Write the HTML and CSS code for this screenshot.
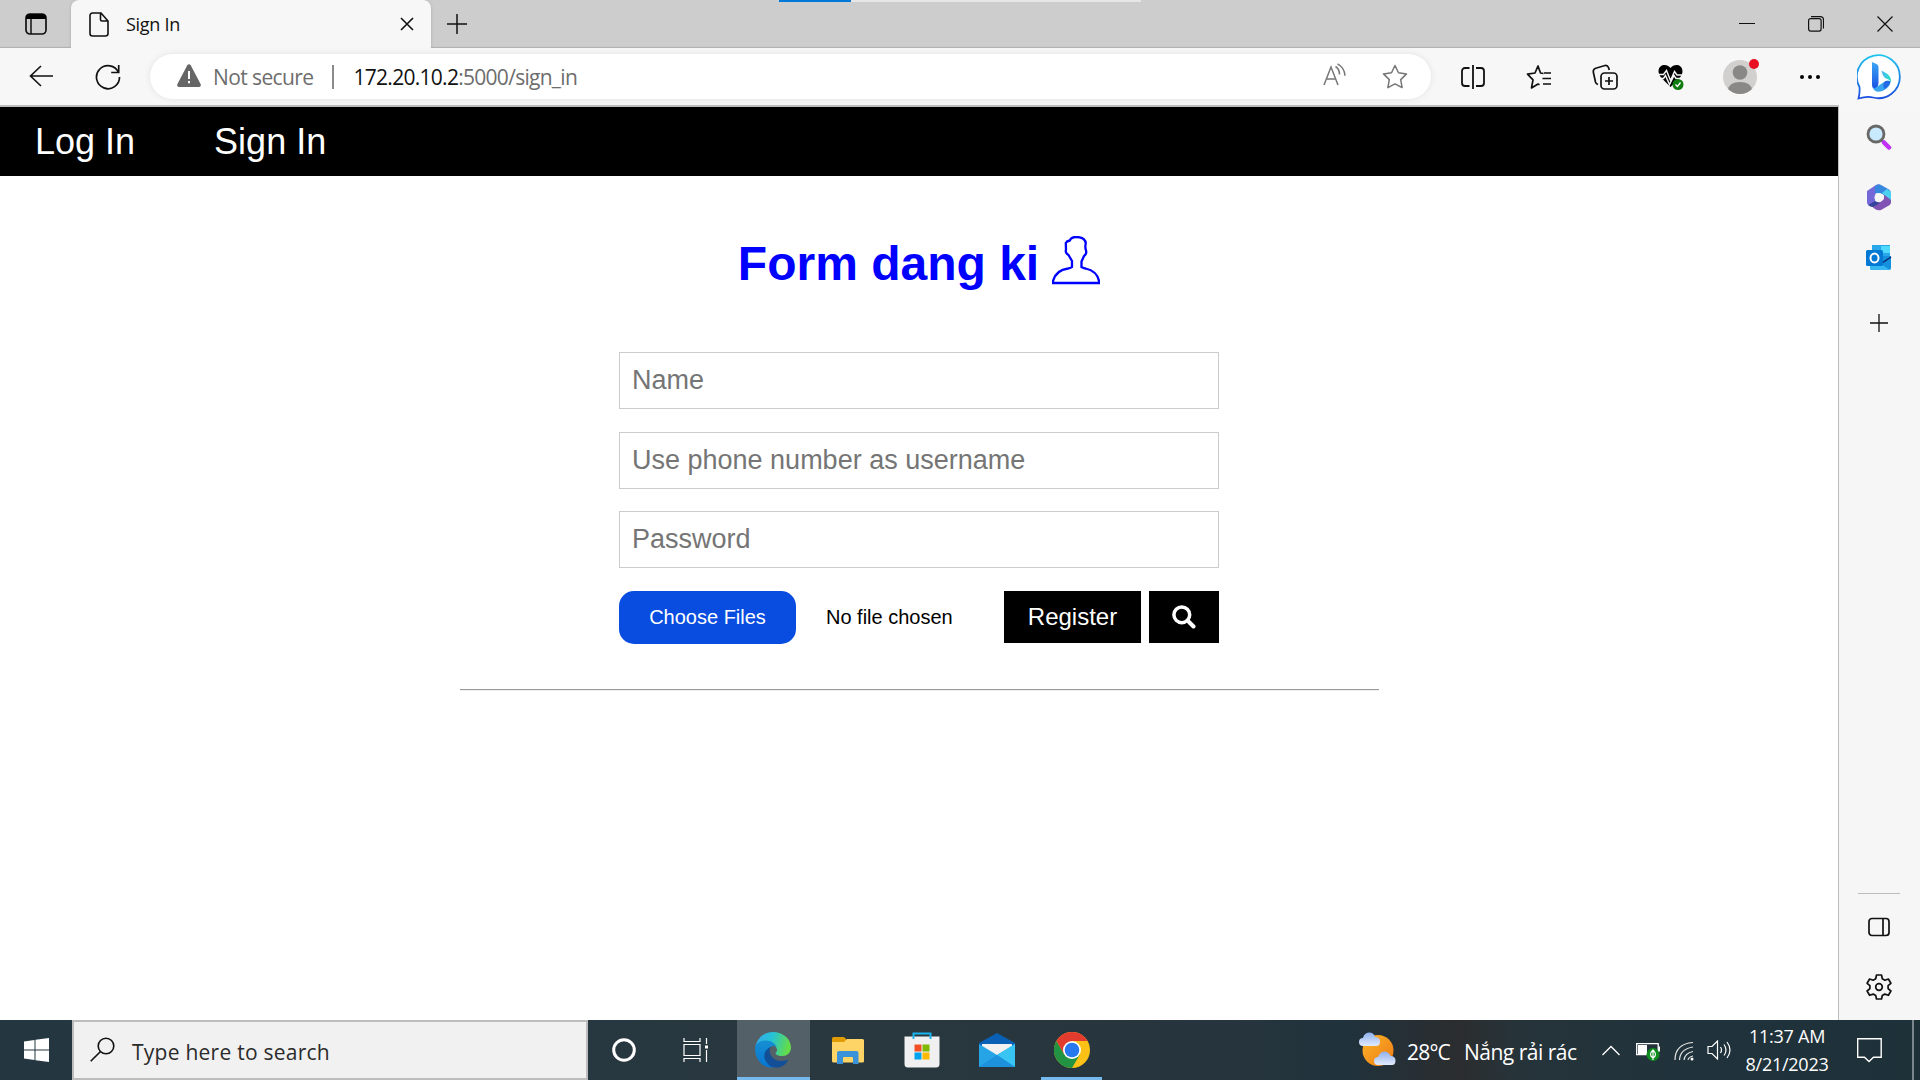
FILE: index.html
```html
<!DOCTYPE html>
<html lang="en">
<head>
<meta charset="utf-8">
<title>Sign In</title>
<link rel="stylesheet" href="styles.css">
</head>
<body>
<div class="screen">
  <header class="titlebar">
    <div class="load-strip"><div class="load-progress"></div></div>
    <svg class="tab-actions" width="22" height="22" viewBox="0 0 22 22"><rect x="1" y="1" width="20" height="20" rx="4" fill="none" stroke="#111" stroke-width="1.7"/><path d="M1 6V5a4 4 0 0 1 4-4h12a4 4 0 0 1 4 4v1z" fill="#000"/><path d="M6 6v15" stroke="#111" stroke-width="1.5"/></svg>
    <div class="tab">
      <svg width="20" height="25" viewBox="0 0 20 25" fill="none" stroke="#111" stroke-width="1.6"><path d="M4 1h8l7 8v12.500a2.500 2.500 0 0 1-2.500 2.500h-13A2.500 2.500 0 0 1 1 21.500V3.500A2.500 2.500 0 0 1 3.500 1zM11.500 1v6.500a1.500 1.500 0 0 0 1.500 1.500h6"/></svg>
      <span class="tab-title">Sign In</span>
      <svg class="tab-close" width="14" height="14" viewBox="0 0 14 14" stroke="#111" stroke-width="1.6"><path d="M1 1l12 12M13 1L1 13"/></svg>
    </div>
    <svg class="new-tab" width="22" height="22" viewBox="0 0 22 22" stroke="#111" stroke-width="1.5"><path d="M11 1v20M1 11h20"/></svg>
    <div class="window-buttons">
      <svg width="16" height="16" viewBox="0 0 16 16" stroke="#111" stroke-width="1"><path d="M0 7.500h16"/></svg>
      <svg width="16" height="16" viewBox="0 0 16 16" fill="none" stroke="#111" stroke-width="1.2"><rect x=".6" y="2.600" width="12.500" height="12.500" rx="2"/><path d="M3 .6h9.500a3 3 0 0 1 3 3V12.500"/></svg>
      <svg width="16" height="16" viewBox="0 0 16 16" stroke="#111" stroke-width="1.2"><path d="M.5.5l15 15M15.500.5l-15 15"/></svg>
    </div>
  </header>

  <div class="toolbar">
    <svg class="back" width="25" height="22" viewBox="0 0 25 22" fill="none" stroke="#111" stroke-width="1.6"><path d="M12 1L1.500 11 12 21M1.500 11H24"/></svg>
    <svg class="reload" width="26" height="26" viewBox="0 0 26 26" fill="none" stroke="#111" stroke-width="1.7"><path d="M23.500 8.500A11.500 11.500 0 1 0 24.500 13M23.700 1v7.500h-7.500"/></svg>
    <div class="address">
      <svg class="warning" width="24" height="23" viewBox="0 0 24 23"><path d="M10.300 1.200a2 2 0 0 1 3.400 0l10 19A2 2 0 0 1 22 23H2a2 2 0 0 1-1.700-2.800z" fill="#666"/><path d="M12 7v8M12 17v2.200" stroke="#fff" stroke-width="2"/></svg>
      <span class="security">Not secure</span>
      <span class="divider"></span>
      <span class="url"><span class="host">172.20.10.2</span>:5000/sign_in</span>
      <svg class="read-aloud" width="23" height="24" viewBox="0 0 23 24" fill="none" stroke="#767676" stroke-width="1.5"><path d="M1 22L8 4l7 18M3.500 16h9"/><path d="M12.500 3.500q4 2.500 4 8M14.500.8q7 3.500 7.500 12"/></svg>
      <svg class="star" width="26" height="25" viewBox="0 0 26 25" fill="none" stroke="#767676" stroke-width="1.5" stroke-linejoin="round"><path d="M13 1.500l3.500 7.300 8 1.100-5.800 5.700 1.400 8L13 19.800l-7.100 3.800 1.400-8-5.800-5.700 8-1.100z"/></svg>
    </div>
    <div class="tools">
      <svg width="26" height="26" viewBox="0 0 26 26" fill="none" stroke="#111" stroke-width="1.800"><path d="M9.500 4H5a3 3 0 0 0-3 3v12a3 3 0 0 0 3 3h4.500M16 4h5a3 3 0 0 1 3 3v12a3 3 0 0 1-3 3h-5M13 1v24"/></svg>
      <svg width="26" height="26" viewBox="0 0 26 26" fill="none" stroke="#111" stroke-width="1.700" stroke-linejoin="round"><path d="M17.500 9.500l-3-.5L12 2 9 9l-7.500 1.200L7 15.800 5.500 24l6.500-4 1.500.8M18 9h7M16.500 14.500H25M17 20h8"/></svg>
      <svg width="26" height="26" viewBox="0 0 26 26" fill="none" stroke="#111" stroke-width="1.700"><rect x="9" y="9" width="16" height="16" rx="3.500"/><path d="M17 13v8M13 17h8M6 20.500q-2-.5-2.500-2.500L1.300 8Q1 5 3.700 4.200L13 1.500q2.500-.5 3.500 2l.8 2.500"/></svg>
      <svg width="26" height="26" viewBox="0 0 26 26"><path d="M12.500 4C9-.5 1 0 .5 7q0 4 3.500 7.500L12.500 23l8.500-8.500Q24.500 11 24.500 7C24 0 16-.5 12.500 4z" fill="#000"/><path d="M0 10.500h5.500l3-4 4 10 4-9 2.500 3.500h6M0 14.500h5.500l2-3 4 9 4.500-9 2 3h7" fill="none" stroke="#f6f6f6" stroke-width="1.400"/><circle cx="20" cy="20.500" r="5.500" fill="#107c10"/><path d="M17.500 20.500l2 2 3-4" fill="none" stroke="#fff" stroke-width="1.300"/></svg>
      <svg class="avatar" width="36" height="36" viewBox="0 0 36 36"><defs><clipPath id="face"><circle cx="17" cy="19" r="17"/></clipPath></defs><circle cx="17" cy="19" r="17" fill="#d2d0ce"/><g clip-path="url(#face)" fill="#8a8886"><circle cx="17" cy="14.500" r="7.300"/><path d="M5 36V32q1-8 12-8t12 8v4z"/></g><circle cx="31" cy="6" r="5" fill="#e81123"/></svg>
      <svg width="22" height="6" viewBox="0 0 22 6"><circle cx="3" cy="3" r="2" /><circle cx="11" cy="3" r="2"/><circle cx="19" cy="3" r="2"/></svg>
    </div>
    <svg class="bing" width="46" height="46" viewBox="0 0 46 46"><defs><linearGradient id="bingRing" x2="0" y2="1"><stop stop-color="#21c5ee"/><stop offset="1" stop-color="#1b4ee0"/></linearGradient><linearGradient id="bingStem" x2="0" y2="1"><stop stop-color="#3aa8f5"/><stop offset="1" stop-color="#1c50e4"/></linearGradient><linearGradient id="bingSwoosh" x2="1" y2="0"><stop stop-color="#46b8f8"/><stop offset="1" stop-color="#2fe0c3"/></linearGradient></defs><path d="M1.500 44.500Q3 39 2.500 33A21.500 21.500 0 1 1 16 43.500Q10 42 1.500 44.500z" fill="#fff" stroke="url(#bingRing)" stroke-width="1.800"/><path d="M15 8l4.500 2q2 1 2 3v16q0 3-2 5-4 2-4.500-3z" fill="url(#bingStem)"/><path d="M24.500 16.500l6 3.500q4 3 3.500 8-2-3-6-4-3-3-3.500-7.500z" fill="url(#bingSwoosh)"/><path d="M15.500 33q2 3 7-2l6-4q4-1 5 1-1 6-8 9-8 2.500-10-4z" fill="#39a5f0"/><path d="M28.500 27q4-1 5 1-1 4-6 7-3-4 1-8z" fill="#2568e5"/></svg>
  </div>

  <div class="workspace">
    <main class="page">
      <nav class="nav"><a>Log In</a><a>Sign In</a></nav>
      <h1 class="heading"><span>Form dang ki</span>
        <svg width="48" height="49" viewBox="0 0 48 49" fill="none" stroke="#00f" stroke-width="2.300"><path d="M1 47v-2q3-11 15-12.500 3-.5 4-1.500v-6l-3.500-6Q13 17 14 13.500L13.800 7q1-2 4-2.500 1.500-3.500 6-3.500 9.500 0 10 6.500-1 3 .2 7Q35 18 32 20l-2.500 5.500V31q2 1.200 4 1.500Q45 35 47 45v2z"/></svg>
      </h1>
      <form class="form">
        <input type="text" placeholder="Name">
        <input type="text" placeholder="Use phone number as username">
        <input type="text" placeholder="Password">
        <div class="actions">
          <button type="button" class="choose">Choose Files</button>
          <span class="file-state">No file chosen</span>
          <button type="button" class="register">Register</button>
          <button type="button" class="find"><svg width="24" height="24" viewBox="0 0 24 24" fill="none" stroke="#fff"><circle cx="9.800" cy="9.800" r="7.900" stroke-width="3.500"/><path d="M15.500 15.500l6 6" stroke-width="4" stroke-linecap="round"/></svg></button>
        </div>
      </form>
      <div class="rule"></div>
    </main>
    <aside class="sidebar">
      <svg class="side-search" width="26" height="26" viewBox="0 0 26 26"><path d="M15.500 16.500l7 6.500" stroke="#555" stroke-width="2"/><path d="M18 18.500l5 5" stroke="#c030f5" stroke-width="4.500" stroke-linecap="round"/><circle cx="10" cy="10" r="8" fill="#c9e9fc" stroke="#686868" stroke-width="2.800"/></svg>
      <svg class="side-office" width="26" height="27" viewBox="0 0 26 27"><path d="M1 7L10 1q3-1.500 4 0l-4 7-1 10-6 3q-2 0-2-3z" fill="#7468d8"/><path d="M9 2q4-2.500 7-.5l7 4q2 1 2 4v6L16 10l-7-1z" fill="#3688df"/><path d="M25 10v9q-.5 2-3 3l-7 4q-3 1-6-1l-5-4 10-3 4-3v-6z" fill="#8054b4"/><path d="M25 8v8l-9-7 5-4z" fill="#4bd1ef"/><path d="M2 21l7-4 5 2-7 4q-3 0-5-2z" fill="#34449b"/><circle cx="13" cy="13.500" r="4.500" fill="#f6f6f6"/></svg>
      <svg class="side-outlook" width="26" height="25" viewBox="0 0 26 25"><path d="M6 0h18v14H6z" fill="#28a8ea"/><path d="M15 1h9v7h-9z" fill="#50d9ff"/><path d="M4 11h21v12q0 2-2 2H6q-2 0-2-2z" fill="#1490df"/><path d="M4 12l20 13H6q-2 0-2-2z" fill="#35b8f1"/><path d="M25 12l-9 6" stroke="#0a2767" stroke-width="1.500"/><rect y="5" width="17" height="16" rx="1.500" fill="#0078d4"/><ellipse cx="8.500" cy="13" rx="4" ry="4.500" fill="none" stroke="#fff" stroke-width="2"/></svg>
      <svg class="side-add" width="18" height="18" viewBox="0 0 18 18" stroke="#111" stroke-width="1.300"><path d="M9 0v18M0 9h18"/></svg>
      <div class="side-bottom">
        <svg width="22" height="20" viewBox="0 0 22 20" fill="none" stroke="#111" stroke-width="1.700"><rect x="1" y="1.500" width="20" height="17" rx="3"/><path d="M15 1.500v17"/></svg>
        <svg width="26" height="26" viewBox="0 0 26 26" fill="none" stroke="#111" stroke-width="1.700" stroke-linejoin="round"><path d="M10.500 1h5l.8 3.800 2.500 1.400 3.600-1.200 2.500 4.300-2.800 2.400v2.900l2.800 2.400-2.500 4.300-3.600-1.200-2.500 1.400-.8 3.500h-5l-.8-3.500-2.500-1.400L3.600 21.300 1.100 17l2.800-2.400v-2.900L1.100 9.300 3.600 5l3.600 1.200 2.500-1.400z"/><circle cx="13" cy="13" r="3.300"/></svg>
      </div>
    </aside>
  </div>

  <footer class="taskbar">
    <div class="start"><svg width="25" height="24" viewBox="0 0 25 24" fill="#fff"><path d="M0 3.500l10.500-1.500v9.500H0zM11.500 1.800L25 0v11.500H11.500zM0 12.500h10.500V22L0 20.500zM11.500 12.500H25V24l-13.500-1.800z"/></svg></div>
    <div class="search-box">
      <svg width="25" height="25" viewBox="0 0 25 25" fill="none" stroke="#111" stroke-width="1.600"><circle cx="16" cy="9" r="7.800"/><path d="M10.500 14.500L.7 24.300"/></svg>
      <span>Type here to search</span>
    </div>
    <div class="apps">
      <div class="app"><svg width="26" height="26" viewBox="0 0 26 26"><circle cx="13" cy="13" r="10.300" fill="none" stroke="#fff" stroke-width="3"/></svg></div>
      <div class="app"><svg width="26" height="24" viewBox="0 0 26 24" fill="none" stroke="#fff" stroke-width="1.200"><path d="M1 0v3.500h16V0M1 24v-3.500h16V24M1 6.500h16v11H1zM23.500 0v6M23.500 12v12"/><path d="M22 7.500h3v3h-3z" fill="#fff" stroke="none"/></svg></div>
      <div class="app edge"><svg width="36" height="36" viewBox="0 0 36 36"><defs><linearGradient id="edgeTop" x2="1" y2=".2"><stop stop-color="#35a9ee"/><stop offset=".5" stop-color="#25c2d4"/><stop offset="1" stop-color="#63dc4a"/></linearGradient><linearGradient id="edgeLeft" x2="0" y2="1"><stop stop-color="#168fd2"/><stop offset="1" stop-color="#0875d1"/></linearGradient></defs><path d="M.5 15C2 6 9 0 18 0c10 0 18 7 18 15.500 0 5-4 8.500-8.500 8.500-5 0-7-1.500-7-3 2-2 2-4 .5-6Q15 8 6 10.500z" fill="url(#edgeTop)"/><path d="M.3 14Q4 8 11.500 8.500 19 9 21.500 15q-2-1.500-4-1-7 3-5.500 11 2 8 11 9.500Q10 38 4 29-.8 23 .3 14z" fill="url(#edgeLeft)"/><path d="M16 14.500q-9 5-6 13 4 9 13 8 7-1 10.500-8-14 5-18.500-6-1-4 1-7z" fill="#124f96"/></svg></div>
      <div class="app"><svg width="32" height="27" viewBox="0 0 32 27"><path d="M0 1.500Q0 0 1.500 0H12l3 3-2 3H0z" fill="#e09b05"/><path d="M0 5h12l3-3h15.500Q32 2 32 3.500V24q0 1.500-1.500 1.500h-29Q0 25.500 0 24z" fill="#ffd466"/><path d="M5 27V16q0-2 2-2h17.500q2 0 2 2v11H21v-6q0-1-1-1h-8q-1 0-1 1v6z" fill="#3a93d8"/></svg></div>
      <div class="app"><svg width="36" height="36" viewBox="0 0 36 36"><path d="M.5 4.500h35V32q0 3.500-3.500 3.500H4Q.5 35.500.5 32z" fill="#f0f0f0"/><path d="M9.500 7V1.500h17V7" fill="none" stroke="#1bb3ed" stroke-width="2"/><path d="M10.500 12.500h7v7h-7z" fill="#f25022"/><path d="M18.500 12.500h7v7h-7z" fill="#7fba00"/><path d="M10.500 20.500h7v7h-7z" fill="#00a4ef"/><path d="M18.500 20.500h7v7h-7z" fill="#ffb900"/></svg></div>
      <div class="app"><svg width="36" height="34" viewBox="0 0 36 34"><path d="M0 10L18 0l18 10v5H0z" fill="#0960b5"/><path d="M3 11h30v13H3z" fill="#f1f1f1"/><path d="M0 11l18 11 18-11v23H0z" fill="#26a4e5"/><path d="M36 11v23L18 22z" fill="#38c5f3"/><path d="M0 34l18-12 18 12z" fill="#1c91dc"/></svg></div>
      <div class="app chrome"><svg width="36" height="36" viewBox="0 0 36 36"><circle cx="18" cy="18" r="18" fill="#fbc116"/><path d="M2.400 9A18 18 0 0 1 33.600 9H18L10.200 22.500z" fill="#e33b2e"/><path d="M2.400 9A18 18 0 0 0 18 36l7.800-13.500H10.200z" fill="#229342"/><circle cx="18" cy="18" r="9" fill="#fff"/><circle cx="18" cy="18" r="7.300" fill="#2879ee"/></svg></div>
    </div>
    <div class="tray">
      <svg class="weather" width="38" height="34" viewBox="0 0 38 34"><defs><linearGradient id="sun" x2="1" y2="1"><stop stop-color="#fbb52b"/><stop offset="1" stop-color="#ee7a12"/></linearGradient><linearGradient id="cloud" x2="0" y2="1"><stop stop-color="#8fb0ee"/><stop offset="1" stop-color="#e2ebfd"/></linearGradient></defs><circle cx="19" cy="18.500" r="15.500" fill="url(#sun)"/><g fill="url(#cloud)"><path d="M4 14a4 4 0 0 1 0-8q1-5 6-5.500 5 0 6 4.500 5 0 5 4.500T17 14z"/><path d="M19 33a4 4 0 0 1 0-8q2-5 6-5.500 5 0 6.500 4.500 5 0 5 4.500T33 33z"/></g></svg>
      <span class="temp">28°C</span>
      <span class="sky">Nắng rải rác</span>
      <svg class="chevron" width="18" height="11" viewBox="0 0 18 11" fill="none" stroke="#fff" stroke-width="1.300"><path d="M.5 10L9 1.500 17.500 10"/></svg>
      <svg class="battery" width="24" height="18" viewBox="0 0 24 18"><path d="M.7.700h21.500v11H.7z" fill="none" stroke="#fff" stroke-width="1.300"/><path d="M2 2h9v9H2zM22.500 3.500H24v5h-1.500z" fill="#fff"/><circle cx="17" cy="11.500" r="6.500" fill="#0c8a1c"/><path d="M17 7q-5 5 0 8 5-3 0-8zM17 9v8" fill="none" stroke="#fff" stroke-width="1.200"/></svg>
      <svg class="wifi" width="20" height="20" viewBox="0 0 20 20" fill="none" stroke="#e8e8e8" stroke-width="1.200"><path d="M1 19Q1 3 19 1.500M5.500 19Q6 8 19 6M10 19q1-7 9-8.500M14 19q.5-3 5-4"/><circle cx="18" cy="18" r="1.500" fill="#fff" stroke="none"/></svg>
      <svg class="volume" width="24" height="20" viewBox="0 0 24 20" fill="none" stroke="#fff" stroke-width="1.200"><path d="M1 6.500h4L10.500 1v18L5 13.500H1zM13.500 7q2 3 0 6M17 4.500q4 5.500 0 11M20 2q6 8 0 16"/></svg>
      <div class="clock"><span>11:37 AM</span><span>8/21/2023</span></div>
      <svg class="notice" width="25" height="25" viewBox="0 0 25 25" fill="none" stroke="#fff" stroke-width="1.400"><path d="M.7.700h23.500v18.500H16.500L12 23.500l-4.500-4.300H.7z"/></svg>
      <div class="show-desktop"></div>
    </div>
  </footer>
</div>
</body>
</html>
```
FILE: styles.css
```css
* { box-sizing: border-box; }
body { margin: 0; font-family: "Open Sans", "Noto Sans", sans-serif; color: #111; background: #fff; overflow: hidden; }
svg { display: block; flex: none; }
.screen { width: 1920px; height: 1080px; display: flex; flex-direction: column; }

.titlebar { position: relative; height: 48px; flex: none; background: #cdcdcd; box-shadow: inset 0 -2px 1px -1px #b0b0b0; display: flex; align-items: center; padding-left: 25px; }
.load-strip { position: absolute; left: 779px; top: 0; width: 362px; height: 2px; background: #e6e6e6; }
.load-progress { width: 72px; height: 2px; background: #0078d7; }
.tab { display: flex; align-items: center; width: 360px; height: 48px; margin-left: 24px; padding: 0 17px 0 18px; background: #f7f7f7; border-radius: 8px 8px 0 0; box-shadow: 0 0 3px #aaa; clip-path: inset(0 -4px 0 -4px); }
.tab-title { font-size: 18px; letter-spacing: -.3px; margin-left: 17px; padding-bottom: 1px; }
.tab-close { margin-left: auto; }
.new-tab { margin: 0 0 1px 15px; }
.window-buttons { display: flex; gap: 53px; margin: 0 27px 0 auto; }

.toolbar { height: 57px; flex: none; background: #f7f7f7; display: flex; align-items: center; padding-left: 29px; }
.back { margin-bottom: 2px; }
.reload { margin-left: 41px; }
.address { width: 1281px; height: 45px; margin-left: 29px; padding: 0 23px 0 27px; display: flex; align-items: center; background: #fff; border-radius: 23px; box-shadow: 0 0 6px #e2e2e2; font-size: 21px; letter-spacing: -.6px; color: #6d6d6d; white-space: nowrap; }
.address .warning { margin-bottom: 2px; }
.security { margin-left: 12px; }
.divider { width: 2px; height: 24px; background: #8b8b8b; margin: 0 20px 0 18px; }
.url { letter-spacing: -.72px; }
.host { color: #111; }
.read-aloud { margin-left: auto; margin-bottom: 4px; }
.star { margin-left: 36px; }
.tools { display: flex; align-items: center; gap: 40px; margin-left: 29px; }
.avatar { margin: 0 0 2px -1px; }
.bing { margin: 0 0 0 36px; }

.workspace { flex: 1; min-height: 0; display: flex; background: #f6f6f6; }
.page { width: 1839px; border-top: 2px solid #bdbdbd; border-right: 1px solid #bdbdbd; background: #fff; display: flex; flex-direction: column; align-items: center; font-family: "Liberation Sans", Arial, sans-serif; }
.nav { align-self: stretch; height: 69px; background: #000; display: flex; align-items: center; gap: 79px; padding: 1px 0 0 35px; color: #fff; font-size: 36px; }
.heading { margin: 60px 0 0; height: 56px; display: flex; align-items: flex-start; gap: 13px; color: #00f; font-size: 48px; line-height: 56px; font-weight: 700; }
.form { width: 600px; margin-top: 60px; display: flex; flex-direction: column; gap: 22.500px; }
.form input { width: 100%; height: 57px; padding: 0 12px; border: 1px solid #ccc; font: 27px "Liberation Sans", Arial, sans-serif; outline: 0; }
.form input::placeholder { color: #757575; opacity: 1; }
.actions { display: flex; align-items: flex-start; }
.actions button { border: 0; color: #fff; background: #000; padding: 0; font-family: inherit; height: 52px; }
.actions .choose { width: 177px; height: 53px; border-radius: 15px; background: #084ce0; font-size: 20px; }
.file-state { margin-left: 30px; font-size: 20px; line-height: 52px; color: #000; }
.actions .register { width: 137px; margin-left: auto; font-size: 24px; }
.actions .find { width: 70px; margin-left: 8px; display: grid; place-items: center; }
.rule { width: 919px; height: 2px; margin-top: 45px; background: #eee; border-top: 1px solid #9a9a9a; }

.sidebar { flex: 1; display: flex; flex-direction: column; align-items: center; padding: 19px 2px 0 0; background: #f6f6f6; }
.side-office { margin-top: 34px; }
.side-outlook { margin-top: 34px; }
.side-add { margin-top: 44px; }
.side-bottom { width: 42px; margin-top: auto; height: 127px; border-top: 1px solid #bbb; padding-top: 23px; display: flex; flex-direction: column; align-items: center; gap: 37px; }

.taskbar { height: 60px; flex: none; display: flex; color: #fff; background: linear-gradient(90deg, #243640, #29383f 45%, #26353d 65%, #20323c 70%, #2b2d2f 76%, #26343a 79%, #20323b 88%, #1e3038); }
.start { width: 72px; display: grid; place-items: center; }
.search-box { width: 516px; border: 2px solid #bdbdbd; background: #f1f1f1; display: flex; align-items: center; padding-left: 16px; gap: 17px; color: #2b2b2b; font-size: 21px; letter-spacing: .25px; }
.search-box svg { margin-bottom: 2px; }
.search-box span { padding-top: 3px; }
.apps { display: flex; }
.app { width: 75px; height: 60px; display: grid; place-items: center; }
.app:first-child { width: 72px; }
.app:nth-child(2) { width: 77px; padding-right: 6px; }
.app.edge { width: 73px; background: #536067; border-bottom: 3px solid #76b9ed; padding: 3px 2px 0 0; }
.app.chrome { width: 61px; margin-left: 7px; border-bottom: 3px solid #76b9ed; padding-top: 3px; }
.app:nth-child(5) { width: 74px; }
.tray { margin-left: auto; display: flex; align-items: center; font-size: 21px; white-space: nowrap; }
.temp { width: 57px; margin-left: 10px; padding-top: 4px; letter-spacing: -.8px; }
.sky { width: 112px; padding-top: 4px; letter-spacing: -.5px; }
.weather { margin-bottom: 3px; }
.chevron { margin-left: 26px; }
.battery { margin-left: 16px; margin-top: 4px; }
.wifi { margin-left: 14px; margin-top: 2px; }
.volume { margin-left: 13px; }
.clock { width: 86px; margin-left: 13px; display: flex; flex-direction: column; align-items: center; font-size: 18px; line-height: 28px; letter-spacing: -.25px; }
.notice { margin-left: 27px; }
.show-desktop { width: 8px; height: 60px; margin-left: 30px; border-left: 2px solid #7b868c; }
```
